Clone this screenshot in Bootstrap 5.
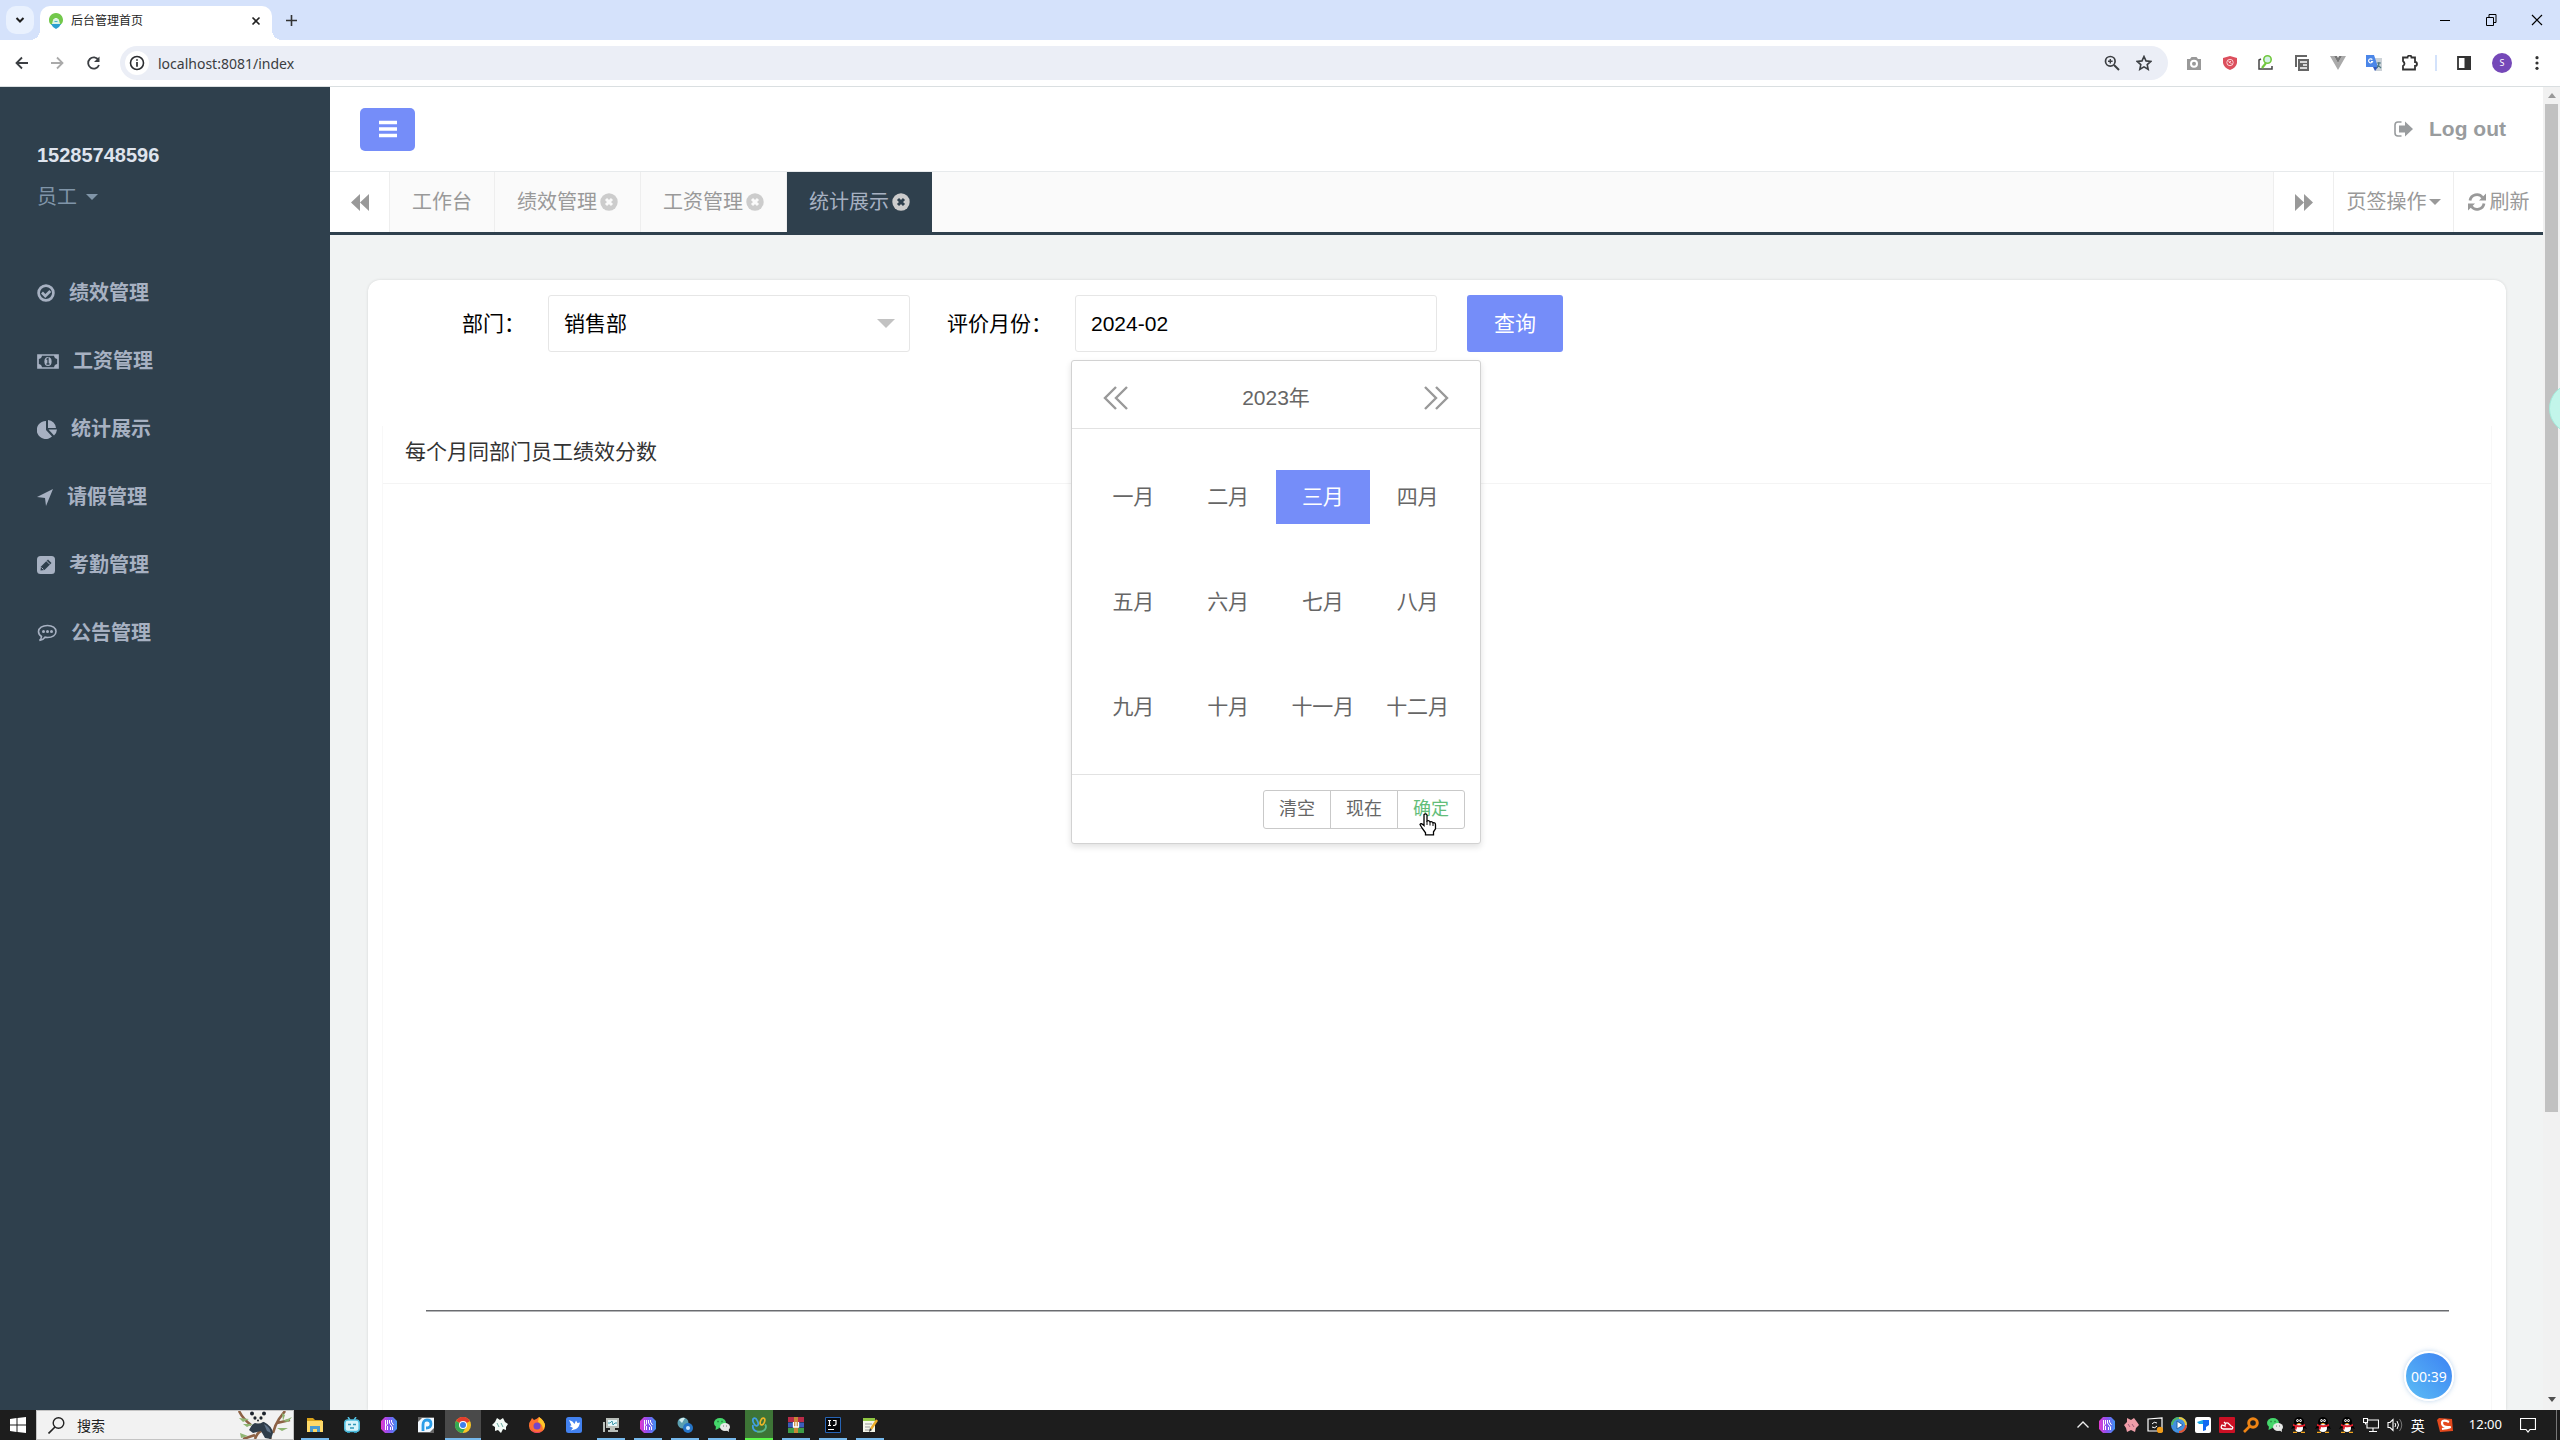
<!DOCTYPE html>
<html lang="zh-CN">
<head>
<meta charset="utf-8">
<meta name="viewport" content="width=device-width, initial-scale=1">
<title>后台管理首页</title>
<link rel="stylesheet" href="https://cdn.jsdelivr.net/npm/bootstrap@5.3.0/dist/css/bootstrap.min.css">
<script src="https://cdn.jsdelivr.net/npm/bootstrap@5.3.0/dist/js/bootstrap.bundle.min.js"></script>
<style>
:root{--ink:#2f404d;--brand:#758df9;--line:#e7eaec;--muted2:#999c9e}
body{font-family:"Liberation Sans","Noto Sans CJK SC",sans-serif;font-size:20px;line-height:1.5;font-weight:400;color:#333}
a{text-decoration:none;color:inherit}
svg{display:block;flex:none}
button{font:inherit;color:inherit}
.bare{background:none;border:0;padding:0}
.ui{font-family:"Noto Sans","Noto Sans CJK SC",sans-serif}
/* browser frame */
.strip{height:40px;background:#d5e2fb;padding-left:6px}
.strip-menu{width:28px;height:28px;border-radius:10px;background:#e9f1fe}
.page-tab{width:232px;height:34px;margin:6px 0 0 6px;padding:0 11px 4px 9px;background:#fff;border-radius:10px 10px 0 0;font-size:12px;color:#1f1f1f;position:relative}
.page-tab::before,.page-tab::after{content:"";position:absolute;bottom:0;width:10px;height:10px}
.page-tab::before{left:-10px;background:radial-gradient(circle at 0 0,transparent 10px,#fff 10px)}
.page-tab::after{right:-10px;background:radial-gradient(circle at 100% 0,transparent 10px,#fff 10px)}
.new-tab{margin-left:14px}
.win-btns{gap:32px;padding-right:16px}
.addrbar{height:47px;border-bottom:1px solid #dadfe1;background:#fff;padding:0 22px 0 14px}
.tools{gap:20px}
.omni{height:34px;background:#ebeef6;border-radius:17px;padding:0 16px 0 5px;margin:0 18px;min-width:0}
.omni input{background:none;border:0;outline:0;font-size:14px;color:#3a3d41;margin-left:7px;min-width:0;flex:1}
.siteinfo{width:24px;height:24px;border-radius:50%;background:#fff}
.avatar{width:20px;height:20px;border-radius:50%;background:#7548b8;color:#fff;font-size:9px;line-height:20px;text-align:center}
.panel-tool{gap:19px;margin-left:-3px}
.panel-tool i{width:2px;height:16px;background:#d3e2fb}
.profile-tool{gap:16px}
.profile-tool svg{margin-right:-6px}
/* application */
.app-body{min-height:0}
.side{width:330px;background:var(--ink);color:#a7b1c2;padding:52px 37px 0}
.side-phone{font-size:20px;font-weight:700;color:#dfe4ed;line-height:32px}
.side-role{color:#8095a8;line-height:32px;margin-top:10px;gap:9px}
.side-menu{margin-top:46px}
.side-menu a{height:68px;font-weight:700;gap:14px}
.caret{border:6px solid transparent;border-top-color:currentColor;border-bottom:0}
.main-col{min-width:0}
.head{height:85px;padding:0 37px 0 30px;color:var(--muted2);border-bottom:1px solid var(--line)}
.burger{width:55px;height:43px;border-radius:5px;background:var(--brand);color:#fff}
.burger:hover{background:var(--brand)}
.logout{font-size:21px;font-weight:700;gap:16px}
.tabsbar{height:63px;border-bottom:3px solid var(--ink);background:#fafafa;color:#999}
.tabsbar>*{border-right:1px solid #eee;padding:0 22px}
.tabsbar>.edge{background:#fff;border-right:0;border-left:1px solid #eee;padding:0}
.tabsbar>.edge-first{padding:0;background:#fff;border-right:1px solid #eee}
.w-arrow{width:60px}
.w-ops{width:120px;gap:2px}
.w-refresh{width:90px;gap:4px}
.tabsbar>.current{background:var(--ink);color:#a7b1c2;border:0;--x:#2f404d}
.tabsbar .gap-x{gap:3px}
.work{background:#f1f3f3;padding:45px 37px 0 38px;min-height:0}
.sheet{background:#fff;border-radius:12px 12px 0 0;padding:0 14px;box-shadow:0 0 3px rgba(0,0,0,.12);color:#000;font-size:21px}
.query{padding:15px 0 0 80px}
.query label{line-height:57px;white-space:nowrap}
.dept-box{margin:0 37px 0 23px}
.month-box{margin:0 30px 0 23px}
.field{width:362px;height:57px;border:1px solid #e6e6e6;border-radius:3px;background:#fff;padding:0 15px;font-size:21px;color:#000;appearance:none;outline:0}
.drop{position:absolute;right:15px;top:24px;border:9px solid transparent;border-top-color:#c2c2c2;border-bottom:0;pointer-events:none}
.go,.go:hover{width:96px;height:57px;border-radius:3px;background:var(--brand);color:#fff;font-size:21px;padding:0}
.picker{position:absolute;left:-4px;top:65px;width:410px;background:#fff;border:1px solid #d2d2d2;border-radius:3px;box-shadow:0 3px 6px rgba(0,0,0,.12);color:#666;z-index:5}
.picker-head{height:68px;border-bottom:1px solid #e2e2e2;padding:7px 31px 0}
.months{display:grid;grid-template-columns:repeat(4,1fr);padding:15px 15px 15px 14px}
.months button{height:54px;margin:26px 0 25px;background:none;border:0;padding:0;white-space:nowrap}
.months .on{background:var(--brand);color:#fff}
.picker-foot{border-top:1px solid #e2e2e2;padding:15px 15px 14px}
.picker-foot button{width:68px;height:39px;margin-left:-1px;border:1px solid #c9c9c9;background:#fff;font-size:18px;padding:0}
.picker-foot button:first-child{border-radius:3px 0 0 3px}
.picker-foot button:last-child{border-radius:0 3px 3px 0;color:#63bd79}
.pointer{position:absolute;right:43px;bottom:7px;z-index:6;pointer-events:none}
.chartbox{margin-top:74px;border:solid #f8f8f8;border-width:0 1px}
.chartbox h2{font-size:21px;font-weight:400;line-height:32px;margin:0;padding:10px 22px 15px;border-bottom:1px solid #f4f4f4;color:#333}
.plot{padding:0 42px 99px 43px}
.axis{border-bottom:1px solid #6a6c70;box-shadow:0 1px #b4b5b7;flex:1}
.rail{width:17px;background:#f1f1f1;padding:6px 0 8px}
.thumb{width:13px;background:#c1c1c1;margin-top:6px;height:77%}
.timer{position:absolute;right:106px;bottom:39px;width:50px;height:50px;border-radius:50%;border:2px solid #fff;background:linear-gradient(45deg,#5cbdf5,#3c82f3);color:#fff;font-size:14px;box-shadow:0 0 5px rgba(60,130,200,.35);z-index:7}
.bubble{position:absolute;right:-40px;top:383px;width:51px;height:51px;border-radius:50%;background:#c2f5ea;border:1px solid #a5ecdc;z-index:7}
/* taskbar */
.task{height:30px;background:#1d1d1d;color:#fff}
.start{width:36px}
.search-os{width:258px;background:#f2f2f2;border:1px solid #c4c4c4;padding-left:11px;color:#222}
.search-os input{background:none;border:0;outline:0;font-size:14px;color:#222;padding:0;margin-left:12px;flex:1;min-width:0}
.search-os input::placeholder{color:#222;opacity:1}
.dock{padding-left:7px}
.app{width:28px;height:30px;border-bottom:2px solid transparent;padding-top:1px;margin-right:9px}
.run{border-color:#76b9ed}
.front{width:36px;background:#4a4a4a;margin:0 5px 0 -4px}
.green{background:#3d7436;border-color:#5cf84a}
.tray{gap:8px;font-size:14px}
.tray svg{width:16px;height:16px}
.clock{font-size:13px;margin:0 10px 0 8px}
.peek{border-left:1px solid #777;width:4px;margin-left:12px}
</style>
</head>
<body class="vh-100 d-flex flex-column overflow-hidden position-relative">

<svg width="0" height="0" class="position-absolute" aria-hidden="true">
  <linearGradient id="gk" x1="0" x2="1"><stop offset="0" stop-color="#e43bd0"/><stop offset=".5" stop-color="#8753f2"/><stop offset="1" stop-color="#3f94f0"/></linearGradient>
  <symbol id="wave" viewBox="0 0 16 16"><path fill="url(#gk)" d="M4 0h8l4 4v8l-4 4H4l-4-4V4z"/><path stroke="#fff" fill="none" d="M4.500 3v10M6.500 3v4l-2 2v4M8.500 3v3l3 4v3M10.500 3v2l2 3M6.500 9v4M9.500 10v3"/></symbol>
  <symbol id="chat" viewBox="0 0 16 16"><ellipse cx="6" cy="6" rx="6" ry="5" fill="#45d76b"/><path fill="#45d76b" d="M2 9l-.5 4 4-2z"/><ellipse cx="11" cy="10" rx="5" ry="4" fill="#e8eae8"/><path fill="#e8eae8" d="M12 13l3 2-.5-4z"/><path stroke="#175a2b" stroke-width="1.400" d="M3.500 4.500h1M7.500 4.500h1"/><path stroke="#777" d="M9 9h1M12 9h1"/></symbol>
  <symbol id="bird" viewBox="0 0 16 16"><ellipse cx="8" cy="5" rx="5" ry="5" fill="#000"/><path fill="#000" d="M3 7L0 12l3-1 1 3h8l1-3 3 1-3-5z"/><ellipse cx="8" cy="11" rx="4" ry="4" fill="#fff"/><path fill="#e01e2a" d="M2 7q6 2.500 12 0v2q-5 2-8 1l-.5 2.500h-2L4 9.500 2 9z"/><ellipse cx="6.500" cy="3.500" rx="1.200" ry="1.600" fill="#fff"/><ellipse cx="9.500" cy="3.500" rx="1.200" ry="1.600" fill="#fff"/><path fill="#f4a51c" d="M5.500 6h5L8 7.200zM2 14.800h4V16H2zM10 14.800h4V16h-4z"/><path d="M6.500 3v1M9.500 3v1" stroke="#000" stroke-width=".7"/></symbol>
  <symbol id="shut" viewBox="0 0 18 18"><circle cx="9" cy="9" r="8.700" fill="#ccc"/><path d="M6 6l6 6M12 6l-6 6" stroke="var(--x,#fafafa)" stroke-width="3"/></symbol>
</svg>

<!-- window title strip -->
<div class="strip d-flex align-items-center flex-shrink-0 ui">
  <button class="bare strip-menu d-flex align-items-center justify-content-center" aria-label="标签页列表"><svg width="10" height="8" viewBox="0 0 10 8"><path d="M1.500 2L5 5.500 8.500 2" fill="none" stroke="#1f1f1f" stroke-width="2"/></svg></button>
  <div class="page-tab d-flex align-items-center">
    <svg width="14" height="16" viewBox="0 0 14 16"><path fill="#72c84b" d="M7 0C2 0 0 4 0 7c0 3 1 4 3 5l1-5q3-4 6 0l1 5c2-1 3-3 3-5 0-3-2-7-7-7z"/><path fill="#d9f1e4" d="M4 7q3-3 6 0v4H4z"/><path fill="#2c9fd0" d="M2 11h10l-2 3-3 2-3-2z"/><path fill="#4bb5c9" d="M5.500 8h3v1h-3z"/></svg>
    <span class="flex-grow-1 ps-2">后台管理首页</span>
    <button class="bare" aria-label="关闭标签页"><svg width="10" height="10" viewBox="0 0 10 10"><path d="M1.500 1.500l7 7M8.500 1.500l-7 7" stroke="#222" stroke-width="1.600"/></svg></button>
  </div>
  <button class="bare new-tab me-auto" aria-label="新标签页"><svg width="11" height="11" viewBox="0 0 11 11"><path d="M5.500 0v11M0 5.500h11" stroke="#333" stroke-width="1.600"/></svg></button>
  <div class="win-btns d-flex align-items-center">
    <button class="bare" aria-label="最小化"><svg width="14" height="12" viewBox="0 0 14 12"><path d="M2 6.500h10" stroke="#000"/></svg></button>
    <button class="bare" aria-label="还原"><svg width="14" height="12" viewBox="0 0 14 12"><path d="M2.500 3.500h7v8h-7zM5 3.500v-3h7v8H9.500" fill="none" stroke="#000"/></svg></button>
    <button class="bare" aria-label="关闭"><svg width="14" height="12" viewBox="0 0 14 12"><path d="M2 1l10 10M12 1L2 11" stroke="#000" stroke-width="1.200"/></svg></button>
  </div>
</div>

<!-- address bar -->
<div class="addrbar d-flex align-items-center flex-shrink-0 ui">
  <div class="tools d-flex">
    <button class="bare" aria-label="后退"><svg width="16" height="16" viewBox="0 0 16 16"><path d="M14 8H3M8 2.500L2.500 8 8 13.500" fill="none" stroke="#3c3f43" stroke-width="1.800"/></svg></button>
    <button class="bare" aria-label="前进"><svg width="16" height="16" viewBox="0 0 16 16"><path d="M1 8h11M7 2.500L12.500 8 7 13.500" fill="none" stroke="#aaa" stroke-width="1.800"/></svg></button>
    <button class="bare" aria-label="重新加载"><svg width="16" height="16" viewBox="0 0 16 16"><path d="M12.500 5A5.600 5.600 0 1 0 13 10" fill="none" stroke="#3c3f43" stroke-width="1.800"/><path d="M13.500 1.500v5.500H8z" fill="#3c3f43"/></svg></button>
  </div>
  <div class="omni d-flex align-items-center flex-grow-1">
    <span class="siteinfo d-flex align-items-center justify-content-center"><svg width="16" height="16" viewBox="0 0 16 16"><circle cx="8" cy="8" r="6.500" fill="none" stroke="#2b2d30" stroke-width="1.600"/><path d="M8 4.200v1.600M8 7v4.800" stroke="#2b2d30" stroke-width="1.700"/></svg></span>
    <input aria-label="地址" value="localhost:8081/index">
    <button class="bare me-3" aria-label="缩放"><svg width="16" height="16" viewBox="0 0 16 16"><circle cx="6.300" cy="6.300" r="4.800" fill="none" stroke="#3c3f43" stroke-width="1.700"/><path d="M10 10l5 5" stroke="#3c3f43" stroke-width="2"/><path d="M6.300 4v4.600M4 6.300h4.600" stroke="#3c3f43" stroke-width="1.400"/></svg></button>
    <button class="bare" aria-label="收藏"><svg width="16" height="16" viewBox="0 0 16 16"><path d="M8 1.500l2 4.400 4.800.5-3.600 3.200 1 4.700L8 11.900l-4.200 2.400 1-4.700L1.200 6.400 6 5.900z" fill="none" stroke="#3c3f43" stroke-width="1.600"/></svg></button>
  </div>
  <div class="tools d-flex align-items-center">
    <svg width="16" height="16" viewBox="0 0 16 16"><path fill="#999" d="M1 4h3l1.500-2h5L12 4h3v11H1z"/><circle cx="8" cy="8.700" r="4" fill="#fff"/><circle cx="8" cy="8.700" r="2" fill="#999"/></svg>
    <svg width="16" height="16" viewBox="0 0 16 16"><path fill="#dc4f5d" d="M8 1l7 2v5q-1 5-7 7-6-2-7-7V3z"/><circle cx="8" cy="7.500" r="3.200" fill="none" stroke="#fbd2d6"/><path d="M6 5.500l4 4M7 8l2-2" stroke="#fbd2d6"/></svg>
    <svg width="16" height="16" viewBox="0 0 16 16"><path d="M3 4L1 5v9h13v-3" fill="none" stroke="#444" stroke-width="1.500"/><circle cx="9.500" cy="4.500" r="3.700" fill="#d4f2e5" stroke="#72c83e" stroke-width="1.600"/><path d="M8 8l-4 5" stroke="#72c83e" stroke-width="2.200"/></svg>
    <svg width="16" height="16" viewBox="0 0 16 16"><path d="M2 12V1h11" fill="none" stroke="#666" stroke-width="2"/><path fill="#666" d="M4 4h11v12H4z"/><path d="M6 7h7M9 10h4M6 13h7" stroke="#fff" stroke-width="1.400"/></svg>
    <svg width="16" height="16" viewBox="0 0 16 16"><path fill="#aaa" d="M0 1h4l4 7 4-7h4L8 15z"/><path fill="#777" d="M4 1h3l1 2 1-2h3L8 8z"/></svg>
    <svg width="16" height="16" viewBox="0 0 16 16"><path fill="#ccd2d8" d="M7 3h9v13H9z"/><path fill="#4b86e8" d="M0 0h8l4 12H0z"/><path fill="#3258bd" d="M7 12h5l-3 4z"/><path d="M11 8h4M13 7v2l-2 4M12 10l3 3" stroke="#4f7b86" stroke-width="1.100"/><path d="M6.300 4.700A2 2 0 1 0 6.500 6.500H5" fill="none" stroke="#fff" stroke-width="1.200"/></svg>
    <svg width="16" height="16" viewBox="0 0 16 16"><path d="M1 2.500h4.500a2 2 0 0 1 4 0H13V7a2 2 0 0 1 0 4v3.500H1V11q3-2 0-5z" fill="none" stroke="#333" stroke-width="1.800"/></svg>
    <div class="panel-tool d-flex align-items-center"><i></i>
    <svg width="16" height="16" viewBox="0 0 16 16"><path d="M2 2h12v12H2z" fill="none" stroke="#333" stroke-width="1.800"/><path fill="#333" d="M8.500 1H15v14H8.500z"/></svg></div>
    <div class="profile-tool d-flex align-items-center"><span class="avatar">S</span>
    <svg width="16" height="16" viewBox="0 0 16 16"><g fill="#333"><circle cx="9" cy="2.700" r="1.600"/><circle cx="9" cy="8" r="1.600"/><circle cx="9" cy="13.300" r="1.600"/></g></svg></div>
  </div>
</div>

<!-- admin application -->
<div class="app-body d-flex flex-grow-1 overflow-hidden position-relative">
  <nav class="side flex-shrink-0">
    <div class="side-phone">15285748596</div>
    <a href="#" class="side-role d-flex align-items-center">员工 <i class="caret"></i></a>
    <div class="side-menu d-flex flex-column">
      <a href="#" class="d-flex align-items-center"><svg width="18" height="18" viewBox="0 0 18 18"><circle cx="9" cy="9" r="7.400" fill="none" stroke="#a7b1c2" stroke-width="2.700"/><path d="M5 8.500L8.300 12l5-5" fill="none" stroke="#a7b1c2" stroke-width="2.700"/></svg>绩效管理</a>
      <a href="#" class="d-flex align-items-center"><svg width="22" height="15" viewBox="0 0 22 15"><path d="M1 1h20v13H1z" fill="none" stroke="#a7b1c2" stroke-width="1.700"/><path fill="#a7b1c2" d="M1 1h4q0 4-4 4zM21 1h-4q0 4 4 4zM1 14h4q0-4-4-4zM21 14h-4q0-4 4-4z"/><ellipse cx="11" cy="7.500" rx="3.600" ry="4.500" fill="#a7b1c2"/><path d="M9.500 5.500L11 4.500V10M9.500 10h3" fill="none" stroke="#2f404d" stroke-width="1.300"/></svg>工资管理</a>
      <a href="#" class="d-flex align-items-center"><svg width="20" height="19" viewBox="0 0 20 19"><path fill="#a7b1c2" d="M9 1v9l6 6.500A9 9 0 1 1 9 1zM11 0a8.500 8.500 0 0 1 8 8h-8zM11.500 9.500H20a9 9 0 0 1-3 6z"/></svg>统计展示</a>
      <a href="#" class="d-flex align-items-center"><svg width="16" height="17" viewBox="0 0 16 17"><path fill="#a7b1c2" d="M16 0L9 17 8 9 0 8z"/></svg>请假管理</a>
      <a href="#" class="d-flex align-items-center"><svg width="18" height="18" viewBox="0 0 18 18"><rect width="18" height="18" rx="3.500" fill="#a7b1c2"/><path fill="#2f404d" d="M3.500 14.500l.5-4L11 3.500 14.500 7 7.500 14z"/><path d="M9.500 5l3.500 3.500" stroke="#a7b1c2"/><path d="M4.500 11.500l2 2" stroke="#a7b1c2"/></svg>考勤管理</a>
      <a href="#" class="d-flex align-items-center"><svg width="20" height="18" viewBox="0 0 20 18"><path d="M10.500 1.500c5 0 8.500 2.500 8.500 6s-3.500 6-8.500 6l-2.500-.3Q6 16 2.500 16.500 4.500 15 4.500 12.500 1.500 10.500 1.500 7.500c0-3.500 4-6 9-6z" fill="none" stroke="#a7b1c2" stroke-width="1.600"/><g fill="#a7b1c2"><circle cx="6.500" cy="7.500" r="1.500"/><circle cx="10.500" cy="7.500" r="1.500"/><circle cx="14.500" cy="7.500" r="1.500"/></g></svg>公告管理</a>
    </div>
  </nav>

  <main class="main-col d-flex flex-column flex-grow-1">
    <header class="head d-flex align-items-center justify-content-between flex-shrink-0">
      <button class="btn burger p-0 d-flex align-items-center justify-content-center" aria-label="菜单"><svg width="18" height="18" viewBox="0 0 18 18"><path d="M0 2.500h18M0 9h18M0 15.500h18" stroke="#fff" stroke-width="3.400"/></svg></button>
      <a href="#" class="logout d-flex align-items-center"><svg width="19" height="16" viewBox="0 0 19 16"><path d="M7.500 1H4Q1 1 1 4v8q0 3 3 3h3.500" fill="none" stroke="#999c9e" stroke-width="1.600"/><path fill="#999c9e" d="M5 4.500h6V.5L19 8l-8 7.500v-4H5z"/></svg>Log out</a>
    </header>
    <div class="tabsbar d-flex align-items-stretch flex-shrink-0">
      <button class="bare edge-first w-arrow d-flex align-items-center justify-content-center" aria-label="向左"><svg width="18" height="17" viewBox="0 0 18 17"><path fill="#999" d="M9 0v17L0 8.500zM18 0v17L9 8.500z"/></svg></button>
      <a href="#" class="d-flex align-items-center">工作台</a>
      <a href="#" class="d-flex align-items-center gap-x">绩效管理<svg width="18" height="18"><use href="#shut"/></svg></a>
      <a href="#" class="d-flex align-items-center gap-x">工资管理<svg width="18" height="18"><use href="#shut"/></svg></a>
      <a href="#" class="d-flex align-items-center gap-x current">统计展示<svg width="18" height="18"><use href="#shut"/></svg></a>
      <button class="bare edge w-arrow ms-auto d-flex align-items-center justify-content-center" aria-label="向右"><svg width="18" height="17" viewBox="0 0 18 17"><path fill="#999" d="M0 0v17l9-8.500zM9 0v17l9-8.500z"/></svg></button>
      <a href="#" class="edge w-ops d-flex align-items-center justify-content-center">页签操作<i class="caret"></i></a>
      <a href="#" class="edge w-refresh d-flex align-items-center justify-content-center"><svg width="18" height="18" viewBox="0 0 18 18"><path d="M2 7.500A7 7 0 0 1 14.500 4.500M16 10.500A7 7 0 0 1 3.500 13.500" fill="none" stroke="#999" stroke-width="2.800"/><path fill="#999" d="M18 .5v7h-7zM0 17.500v-7h7z"/></svg>刷新</a>
    </div>

    <section class="work flex-grow-1 d-flex flex-column">
      <div class="sheet flex-grow-1 d-flex flex-column">
        <form class="query d-flex" onsubmit="return false">
          <label for="dept">部门：</label>
          <div class="dept-box position-relative">
            <select id="dept" class="field"><option>销售部</option></select><i class="drop"></i>
          </div>
          <label for="month">评价月份：</label>
          <div class="month-box position-relative">
            <input id="month" class="field" value="2024-02">
            <div class="picker">
              <div class="picker-head d-flex align-items-center justify-content-between">
                <button type="button" class="bare" aria-label="上一年"><svg width="26" height="24" viewBox="0 0 26 24"><path d="M13 1L2 12l11 11M24 1L13 12l11 11" fill="none" stroke="#999" stroke-width="2.400"/></svg></button>
                <span>2023年</span>
                <button type="button" class="bare" aria-label="下一年"><svg width="26" height="24" viewBox="0 0 26 24"><path d="M2 1l11 11L2 23M13 1l11 11-11 11" fill="none" stroke="#999" stroke-width="2.400"/></svg></button>
              </div>
              <div class="months">
                <button type="button">一月</button><button type="button">二月</button><button type="button" class="on">三月</button><button type="button">四月</button>
                <button type="button">五月</button><button type="button">六月</button><button type="button">七月</button><button type="button">八月</button>
                <button type="button">九月</button><button type="button">十月</button><button type="button">十一月</button><button type="button">十二月</button>
              </div>
              <div class="picker-foot d-flex justify-content-end">
                <button type="button">清空</button><button type="button">现在</button><button type="button">确定</button>
              </div>
              <svg class="pointer" width="18" height="23" viewBox="0 0 18 23"><path d="M5 1.500q2-1.500 3 .5v6q2-1 3 .8 2-.8 3 1 2.500-.5 2.500 2v4l-2 3v3H6.500v-2L3 15l-2-3.500q1-2 4 1z" fill="#fff" stroke="#000" stroke-width="1.300"/><path d="M8 8v4M11 9v3.500M14 10v3" stroke="#000"/></svg>
            </div>
          </div>
          <button class="btn go">查询</button>
        </form>
        <div class="chartbox flex-grow-1 d-flex flex-column">
          <h2>每个月同部门员工绩效分数</h2>
          <div class="plot flex-grow-1 d-flex flex-column"><div class="axis"></div></div>
        </div>
      </div>
    </section>
  </main>

  <div class="rail flex-shrink-0 d-flex flex-column align-items-center">
    <svg width="8" height="5" viewBox="0 0 8 5"><path fill="#999" d="M0 5h8L4 0z"/></svg>
    <div class="thumb"></div>
    <svg width="8" height="5" viewBox="0 0 8 5" class="mt-auto"><path fill="#505050" d="M0 0h8L4 5z"/></svg>
  </div>
</div>

<div class="bubble"></div>
<div class="timer ui d-flex align-items-center justify-content-center">00:39</div>

<!-- desktop taskbar -->
<footer class="task d-flex flex-shrink-0 align-items-stretch ui">
  <button class="bare start d-flex align-items-center justify-content-center" aria-label="开始"><svg width="16" height="16" viewBox="0 0 16 16"><path fill="#fff" d="M0 2l6.500-1v6.500H0zM7.500 1L16 0v7.500H7.500zM0 8.500h6.500V15L0 14zM7.500 8.500H16V16l-8.500-1z"/></svg></button>
  <div class="search-os d-flex align-items-center">
    <svg width="17" height="17" viewBox="0 0 17 17"><circle cx="10.500" cy="6" r="5.300" fill="none" stroke="#222" stroke-width="1.400"/><path d="M7 10L.5 16.500" stroke="#222" stroke-width="1.600"/></svg>
    <input aria-label="搜索" placeholder="搜索">
    <svg width="56" height="28" viewBox="0 0 56 28"><path d="M2 0Q6 8 14 14M18 28q2-6 6-8t10 8M36 22Q38 14 42 8l6-8M40 12l13-3M6 28l12-4" fill="none" stroke="#8d6245" stroke-width="2.600"/><g fill="#8fb573"><path d="M2 7l10 1-6 3zM6 13l10 0-6 3zM45 2l3 2-2 6zM46 10l9-4-4 5zM40 17l11 0-6 3zM3 22l8 3-7 2z"/></g><path fill="#2f3d4a" d="M15 14q6-5 12-3 8 4 9 11l-2 6-6-1-4-7-8 2-4-3z"/><path fill="#60748a" d="M27 13q6 3 7 9l-4-2z"/><ellipse cx="21" cy="7" rx="7" ry="5.500" fill="#f1f0ea"/><g fill="#1d242c"><circle cx="15" cy="2.500" r="2"/><circle cx="27" cy="2.500" r="2"/><ellipse cx="18" cy="7" rx="1.600" ry="1.700"/><ellipse cx="24" cy="7" rx="1.600" ry="1.700"/><circle cx="21" cy="9.500" r="1"/></g></svg>
  </div>
  <div class="dock d-flex">
    <a href="#" aria-label="文件" class="app run d-flex align-items-center justify-content-center"><svg width="16" height="16" viewBox="0 0 16 16"><path fill="#d9a21b" d="M0 1h6l2 2h7v4H0z"/><path fill="#ffd968" d="M0 4h16v11H0z"/><path fill="#4b9cd0" d="M3 15V9h10v6h-3v-3H6v3z"/></svg></a>
    <a href="#" aria-label="视频" class="app d-flex align-items-center justify-content-center"><svg width="16" height="16" viewBox="0 0 16 16"><path d="M4 0l2 3M12 0l-2 3" stroke="#52bfe0" stroke-width="1.500"/><rect x=".8" y="3" width="14.400" height="11.500" rx="3" fill="#d8f4fb" stroke="#52bfe0" stroke-width="1.600"/><path d="M4 7.500h3M9 7.500h3M6 11h4M3 15.500h3M10 15.500h3" stroke="#3298b9" stroke-width="1.300"/></svg></a>
    <a href="#" aria-label="录音" class="app d-flex align-items-center justify-content-center"><svg width="16" height="16"><use href="#wave"/></svg></a>
    <a href="#" aria-label="网盘" class="app d-flex align-items-center justify-content-center"><svg width="16" height="16" viewBox="0 0 16 16"><path fill="#666" d="M0 0h16v16H0z"/><path fill="#f3f9ff" d="M4 1h12v10l-4 4H0V5z"/><path d="M5 14V8q0-5 4-5t4 4-5 4" fill="none" stroke="#2b9de8" stroke-width="2.800"/></svg></a>
    <a href="#" aria-label="浏览器" class="app run front d-flex align-items-center justify-content-center"><svg width="16" height="16" viewBox="0 0 16 16"><circle cx="8" cy="8" r="8" fill="#f8c426"/><path fill="#e33e2e" d="M8 8L1 4a8 8 0 0 1 14 0z"/><path fill="#36a853" d="M8 8L1 4a8 8 0 0 0 6.500 12L11 10z"/><circle cx="8" cy="8" r="4" fill="#fff"/><circle cx="8" cy="8" r="3" fill="#4080ec"/></svg></a>
    <a href="#" aria-label="花" class="app d-flex align-items-center justify-content-center"><svg width="16" height="16" viewBox="0 0 16 16"><path fill="#f3faf6" d="M5 1l3 2 3-2 2 4 3 2-2 3v3l-3-1-2 4-3-3-3 1v-4L0 8l3-3z"/><path d="M5 6l2 4M9 6l2 4" stroke="#69aaa0"/></svg></a>
    <a href="#" aria-label="火狐" class="app d-flex align-items-center justify-content-center"><svg width="16" height="16" viewBox="0 0 16 16"><path fill="#ff7131" d="M2 3l1-2 2 2q3-1 5-3 6 4 6 9a8 7 0 0 1-16 0q0-4 2-6z"/><path fill="#ffc928" d="M10 0q6 4 6 9l-2 4q0-6-5-8z"/><path fill="#e93c73" d="M1 9q2 6 8 6l4-1q-2 2-5 2-5 0-7-7z"/><circle cx="8" cy="9" r="3.500" fill="#7547c9"/></svg></a>
    <a href="#" aria-label="翻译" class="app d-flex align-items-center justify-content-center"><svg width="16" height="16" viewBox="0 0 16 16"><rect width="16" height="16" rx="2.500" fill="#4281ef"/><path fill="#fff" d="M3 3q4 1 5.500 4L10 3.500l1.500 2.500 2.500-.5q-1 5-4 6.500l-5 1.500L7 11 3.500 9l2-.5z"/></svg></a>
    <a href="#" aria-label="监视器" class="app run d-flex align-items-center justify-content-center"><svg width="16" height="16" viewBox="0 0 16 16"><path fill="#b8beb9" d="M3 1h13v10H3zM7 11h5v2h3v2H5v-2h2zM0 5h2v10H0z"/><path fill="#e5f7fb" d="M5 3h9v6H5z"/><path d="M5 6h2l2-2 1 4 2-2h2" fill="none" stroke="#3a95a6"/></svg></a>
    <a href="#" aria-label="录音" class="app run d-flex align-items-center justify-content-center"><svg width="16" height="16"><use href="#wave"/></svg></a>
    <a href="#" aria-label="服务" class="app run d-flex align-items-center justify-content-center"><svg width="16" height="16" viewBox="0 0 16 16"><circle cx="6" cy="6" r="5.500" fill="#5a9fb0"/><path fill="#d5eef0" d="M2 3q3-3 6-2L5 6z"/><circle cx="11" cy="11" r="5" fill="#2675c8"/><circle cx="11" cy="11" r="2" fill="#cce7ff"/></svg></a>
    <a href="#" aria-label="微信" class="app run d-flex align-items-center justify-content-center"><svg width="16" height="16"><use href="#chat"/></svg></a>
    <a href="#" aria-label="录屏" class="app green d-flex align-items-center justify-content-center"><svg width="16" height="16" viewBox="0 0 16 16"><ellipse cx="4.500" cy="5" rx="2.200" ry="4" transform="rotate(-25 4.500 5)" fill="none" stroke="#439fe2" stroke-width="1.700"/><ellipse cx="11.500" cy="4.500" rx="2" ry="3.600" transform="rotate(20 11.500 4.500)" fill="none" stroke="#eab529" stroke-width="1.700"/><path d="M2 8q-1 5 4 6.500" fill="none" stroke="#439fe2" stroke-width="1.800"/><path d="M6 14.500q5 1 8-2 2-3 0-5" fill="none" stroke="#5cb88b" stroke-width="1.800"/></svg></a>
    <a href="#" aria-label="压缩" class="app run d-flex align-items-center justify-content-center"><svg width="16" height="16" viewBox="0 0 16 16"><path fill="#b92b48" d="M0 0h16v5H0z"/><path fill="#3c5dbb" d="M0 5.500h16v5H0z"/><path fill="#3e9d48" d="M0 11h16v5H0z"/><path fill="#c98837" d="M6 0h4v16H6z"/><path d="M5.500 5v5h5V5M8 5v5" fill="none" stroke="#fff" stroke-width="1.300"/></svg></a>
    <a href="#" aria-label="开发" class="app run d-flex align-items-center justify-content-center"><svg width="16" height="16" viewBox="0 0 16 16"><path fill="#05070b" stroke="#2764b5" d="M.5.500h15v15H.5z"/><path d="M3 3.500h3M4.500 3.500v5M3 8.500h3M8 3.500h3v3.500q0 1.500-3 1.500M3 12.500h6" fill="none" stroke="#fff" stroke-width="1.200"/></svg></a>
    <a href="#" aria-label="编辑" class="app run d-flex align-items-center justify-content-center"><svg width="16" height="16" viewBox="0 0 16 16"><path fill="#f4f6e9" d="M1 1h12v14H1z"/><path fill="#8fc742" d="M1 1h12v3H1z"/><path d="M3 7h7M3 10h5M3 13h5" stroke="#999"/><path d="M15 3L9 12" stroke="#ecab28" stroke-width="2.400"/><path fill="#333" d="M7 15l1-4 2 2z"/></svg></a>
  </div>
  <div class="tray d-flex align-items-center ms-auto">
    <svg viewBox="0 0 16 16"><path d="M2.500 10.500L8 5l5.500 5.500" fill="none" stroke="#eee" stroke-width="1.400"/></svg>
    <svg><use href="#wave"/></svg>
    <svg viewBox="0 0 16 16"><path fill="#ef9da8" d="M4 1l4 2 3-2 3 4 2 3-3 3-1 4-4-2-4 2-1-4-2-3 3-3z"/><path d="M5 7l2 3M9 7l2 3" stroke="#9f5f79"/></svg>
    <svg viewBox="0 0 16 16"><path d="M1 2l14-1v13H1z" fill="none" stroke="#fff" stroke-width="1.200"/><path d="M5 7q2-3 5-1M10 9q-2 3-5 1" fill="none" stroke="#fff"/><circle cx="13" cy="13" r="3.200" fill="#ef9c1a"/></svg>
    <svg viewBox="0 0 16 16"><circle cx="8" cy="8" r="8" fill="#4390df"/><path d="M8 1a7 7 0 0 1 7 7" stroke="#e9c93a" stroke-width="2" fill="none"/><path d="M15 8a7 7 0 0 1-7 7" stroke="#e4542e" stroke-width="2" fill="none"/><path d="M1 8a7 7 0 0 1 7-7" stroke="#52b763" stroke-width="2" fill="none"/><path fill="#fff" stroke="#2563a8" d="M6 4l6 4-6 4z"/></svg>
    <svg viewBox="0 0 16 16"><rect width="16" height="16" rx="2" fill="#fff"/><path fill="#17a6e8" d="M2 5l6-2v4H4z"/><path fill="#1168f2" d="M8 3h6v5l-3 2v3l-3 1z"/></svg>
    <svg viewBox="0 0 16 16"><rect width="16" height="16" rx="1" fill="#cb1024"/><path d="M4 12q-3-1-1-4l3 1q0-4 3-3l3 3q3 1 1 3zM5 5l2 2" fill="none" stroke="#fff" stroke-width="1.300"/></svg>
    <svg viewBox="0 0 16 16"><circle cx="10" cy="6" r="4.300" fill="none" stroke="#ee8414" stroke-width="3"/><path d="M7 9l-6 6" stroke="#ee8414" stroke-width="2.600"/></svg>
    <svg><use href="#chat"/></svg>
    <svg><use href="#bird"/></svg><svg><use href="#bird"/></svg><svg><use href="#bird"/></svg>
    <svg viewBox="0 0 16 16"><path d="M5 3h10.500v8H4V6M10 11v3M6 14.500h8M.5 1.500h4v4h-4zM2.500 5.500v2" fill="none" stroke="#fff" stroke-width="1.100"/></svg>
    <svg viewBox="0 0 16 16"><path d="M1 5.500h2l3-3v11l-3-3H1z" fill="none" stroke="#fff" stroke-width="1.100"/><path d="M8 6q1.500 2 0 4M10 4q3 4 0 8" fill="none" stroke="#fff"/><path d="M12.500 2q4.500 6 0 12" fill="none" stroke="#777"/></svg>
    <span>英</span>
    <svg viewBox="0 0 16 16" class="ms-1"><path fill="#e4491d" d="M2 1l13 1 1 12-13 1L0 3z"/><path d="M12 5Q5 2 5 6t6 4-6 2" fill="none" stroke="#fff" stroke-width="2.200"/></svg>
    <span class="clock">12:00</span>
    <svg viewBox="0 0 16 16"><path d="M.5 1.500h15v11H10L8 15l-2-2.500H.5z" fill="none" stroke="#fff" stroke-width="1.200"/></svg>
    <i class="peek align-self-stretch"></i>
  </div>
</footer>
</body>
</html>
